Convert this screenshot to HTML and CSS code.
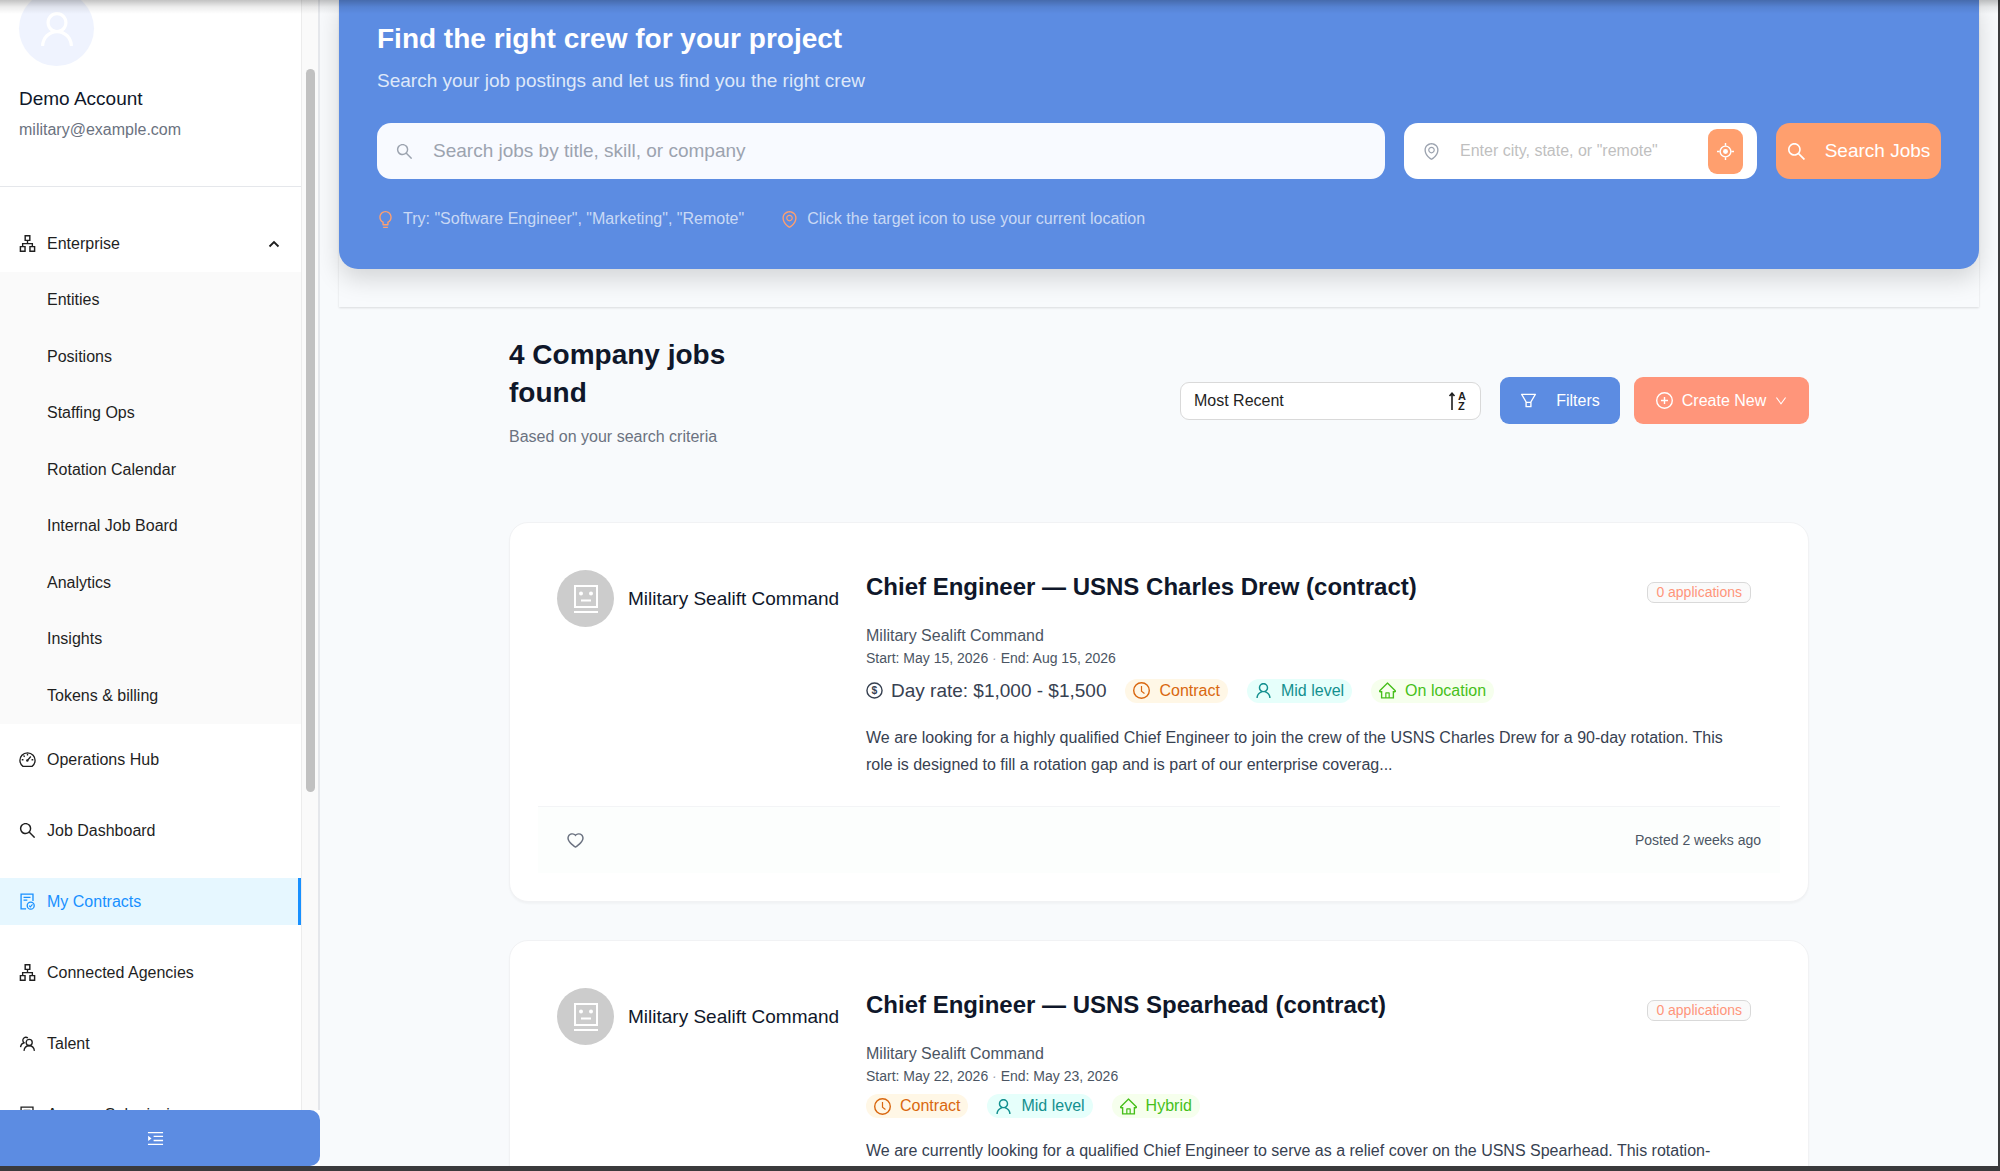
FILE: index.html
```
<!DOCTYPE html>
<html lang="en">
<head>
  <meta charset="UTF-8" />
  <meta name="viewport" content="width=device-width, initial-scale=1" />
  <title>My Contracts</title>
  <link rel="stylesheet" href="styles.css">
</head>
<body>

<!-- Icon sprite -->
<svg class="sprite" aria-hidden="true">
  <symbol id="i-user" viewBox="64 64 896 896"><path d="M858.5 763.6a374 374 0 00-80.6-119.5 375.63 375.63 0 00-119.5-80.6c-.4-.2-.8-.3-1.2-.5C719.5 518 760 444.7 760 362c0-137-111-248-248-248S264 225 264 362c0 82.7 40.5 156 102.8 201.1-.4.2-.8.3-1.2.5-44.8 18.9-85 46-119.5 80.6a375.63 375.63 0 00-80.6 119.5A371.7 371.7 0 00136 901.8a8 8 0 008 8.2h60c4.4 0 7.9-3.5 8-7.8 2-77.2 33-149.5 87.8-204.3 56.7-56.7 132-87.9 212.2-87.9s155.5 31.2 212.2 87.9C779 752.7 810 825 812 902.2c.1 4.4 3.6 7.8 8 7.8h60a8 8 0 008-8.2c-1-47.8-10.9-94.3-29.5-138.2zM512 534c-45.9 0-89.1-17.9-121.6-50.4S340 407.9 340 362c0-45.9 17.9-89.1 50.4-121.6S466.1 190 512 190s89.1 17.9 121.6 50.4S684 316.1 684 362c0 45.9-17.9 89.1-50.4 121.6S557.9 534 512 534z"/></symbol>
  <symbol id="i-search" viewBox="64 64 896 896"><path d="M909.6 854.5L649.9 594.8C690.2 542.7 712 479 712 412c0-80.2-31.3-155.4-87.9-212.1-56.6-56.7-132-87.9-212.1-87.9s-155.5 31.3-212.1 87.9C143.2 256.5 112 331.8 112 412c0 80.1 31.3 155.5 87.9 212.1C256.5 680.8 331.8 712 412 712c67 0 130.6-21.8 182.7-62l259.7 259.6a8.2 8.2 0 0011.6 0l43.6-43.5a8.2 8.2 0 000-11.6zM570.4 570.4C528 612.7 471.8 636 412 636s-116-23.3-158.4-65.6C211.3 528 188 471.8 188 412s23.3-116.1 65.6-158.4C296 211.3 352.2 188 412 188s116.1 23.2 158.4 65.6S636 352.2 636 412s-23.3 116.1-65.6 158.4z"/></symbol>
  <symbol id="i-org" viewBox="64 64 896 896"><path d="M908 640H804V488c0-4.4-3.6-8-8-8H548v-96h108c8.8 0 16-7.2 16-16V80c0-8.8-7.2-16-16-16H368c-8.8 0-16 7.2-16 16v288c0 8.8 7.2 16 16 16h108v96H228c-4.4 0-8 3.6-8 8v152H116c-8.8 0-16 7.2-16 16v288c0 8.8 7.2 16 16 16h288c8.8 0 16-7.2 16-16V656c0-8.8-7.2-16-16-16H292v-88h440v88H620c-8.8 0-16 7.2-16 16v288c0 8.8 7.2 16 16 16h288c8.8 0 16-7.2 16-16V656c0-8.8-7.2-16-16-16zm-564 76v168H176V716h168zm84-408V140h168v168H428zm420 576H680V716h168v168z"/></symbol>
  <symbol id="i-pin" viewBox="64 64 896 896"><path d="M854.6 289.1a362.49 362.49 0 00-79.9-115.7 370.83 370.83 0 00-118.2-77.8C610.7 76.6 562.1 67 512 67c-50.1 0-98.7 9.6-144.5 28.5-44.3 18.3-84 44.5-118.2 77.8A363.6 363.6 0 00169.4 289c-19.5 45-29.4 92.8-29.4 142 0 70.6 16.9 140.9 50.1 208.7 26.7 54.5 64 107.6 111 158.1 80.3 86.2 164.5 138.9 188.4 153a43.9 43.9 0 0022.4 6.1c7.8 0 15.5-2 22.4-6.1 23.9-14.1 108.1-66.8 188.4-153 47-50.4 84.3-103.6 111-158.1C867.1 572 884 501.8 884 431.1c0-49.2-9.9-97-29.4-142zM512 880.2c-65.9-41.9-300-207.8-300-449.1 0-77.9 31.1-151.1 87.6-206.3C356.3 169.5 431.7 139 512 139s155.7 30.5 212.4 85.9C780.9 280 812 353.2 812 431.1c0 241.3-234.1 407.2-300 449.1zm0-617.2c-97.2 0-176 78.8-176 176s78.8 176 176 176 176-78.8 176-176-78.8-176-176-176zm79.2 255.2A111.6 111.6 0 01512 551c-29.9 0-58-11.7-79.2-32.8A111.6 111.6 0 01400 439c0-29.9 11.7-58 32.8-79.2A111.6 111.6 0 01512 327c29.9 0 58 11.6 79.2 32.8S624 409.1 624 439c0 29.9-11.6 58-32.8 79.2z"/></symbol>
  <symbol id="i-aim" viewBox="64 64 896 896"><g fill="none" stroke="currentColor" stroke-width="76"><circle cx="512" cy="512" r="282"/><path d="M512 64v140M512 820v140M64 512h140M820 512h140"/></g><circle cx="512" cy="512" r="130"/></symbol>
  <symbol id="i-bulb" viewBox="64 64 896 896"><path d="M632 888H392c-4.4 0-8 3.6-8 8v32c0 17.7 14.3 32 32 32h192c17.7 0 32-14.3 32-32v-32c0-4.4-3.6-8-8-8zM512 64c-181.1 0-328 146.9-328 328 0 121.4 66 227.4 164 284.1V792c0 17.7 14.3 32 32 32h264c17.7 0 32-14.3 32-32V676.1c98-56.7 164-162.7 164-284.1 0-181.1-146.9-328-328-328zm127.9 549.8L604 634.6V752H420V634.6l-35.9-20.8C305.4 568.3 256 484.5 256 392c0-141.4 114.6-256 256-256s256 114.6 256 256c0 92.5-49.4 176.3-128.1 221.8z"/></symbol>
  <symbol id="i-filter" viewBox="64 64 896 896"><path d="M880.1 154H143.9c-24.5 0-39.8 26.7-27.5 48L349 597.4V838c0 17.7 14.2 32 31.8 32h262.4c17.6 0 31.8-14.3 31.8-32V597.4L907.7 202c12.2-21.3-3.1-48-27.6-48zM603.4 798H420.6V642h182.9v156zm9.6-236.6l-9.5 16.6h-183l-9.5-16.6L212.7 226h598.6L613 561.4z"/></symbol>
  <symbol id="i-plus" viewBox="64 64 896 896"><g fill="none" stroke="currentColor" stroke-width="74"><circle cx="512" cy="512" r="411"/><path d="M512 328v368M328 512h368"/></g></symbol>
  <symbol id="i-down" viewBox="64 64 896 896"><path d="M884 256h-75c-5.1 0-9.9 2.5-12.9 6.6L512 654.2 227.9 262.6c-3-4.1-7.8-6.6-12.9-6.6h-75c-6.5 0-10.3 7.4-6.5 12.7l352.6 486.1c12.8 17.6 39 17.6 51.7 0l352.6-486.1c3.9-5.3.1-12.7-6.4-12.7z"/></symbol>
  <symbol id="i-clock" viewBox="64 64 896 896"><circle cx="512" cy="512" r="411" fill="none" stroke="currentColor" stroke-width="74"/><path d="M686.7 638.6L544.1 535.5V288c0-4.4-3.6-8-8-8H488c-4.4 0-8 3.6-8 8v275.4c0 2.6 1.2 5 3.3 6.5l165.4 120.6c3.6 2.6 8.6 1.8 11.2-1.7l28.6-39c2.6-3.7 1.8-8.7-1.8-11.2z"/></symbol>
  <symbol id="i-home" viewBox="64 64 896 896"><path d="M946.5 505L560.1 118.8l-25.9-25.9a31.5 31.5 0 00-44.4 0L77.5 505a63.9 63.9 0 00-18.8 46c.4 35.2 29.7 63.3 64.9 63.3h42.5V940h691.8V614.3h43.4c17.1 0 33.2-6.7 45.3-18.8a63.6 63.6 0 0018.7-45.3c0-17-6.7-33.1-18.8-45.2zM568 868H456V664h112v204zm217.9-325.7V868H632V640c0-22.1-17.9-40-40-40H432c-22.1 0-40 17.9-40 40v228H238.1V542.3h-96l370-369.7 23.1 23.1L882 542.3h-96.1z"/></symbol>
  <symbol id="i-heart" viewBox="64 64 896 896"><path d="M923 283.6a260.04 260.04 0 00-56.9-82.8 264.4 264.4 0 00-84-55.5A265.34 265.34 0 00679.7 125c-49.3 0-97.4 13.5-139.2 39-10 6.1-19.5 12.8-28.5 20.1-9-7.3-18.5-14-28.5-20.1-41.8-25.5-89.9-39-139.2-39-35.5 0-69.9 6.8-102.4 20.3-31.4 13-59.7 31.7-84 55.5a258.44 258.44 0 00-56.9 82.8c-13.9 32.3-21 66.6-21 101.9 0 33.3 6.8 68 20.3 103.3 11.3 29.5 27.5 60.1 48.2 91 32.8 48.9 77.9 99.9 133.9 151.6 92.8 85.7 184.7 144.9 188.6 147.3l23.7 15.2c10.5 6.7 24 6.7 34.5 0l23.7-15.2c3.9-2.5 95.7-61.6 188.6-147.3 56-51.7 101.1-102.7 133.9-151.6 20.7-30.9 37-61.5 48.2-91 13.5-35.3 20.3-70 20.3-103.3.1-35.3-7-69.6-20.9-101.9zM512 814.8S156 586.7 156 385.5C156 283.6 240.3 201 344.3 201c73.1 0 136.5 40.8 167.7 100.4C543.2 241.8 606.6 201 679.7 201c104 0 188.3 82.6 188.3 184.5 0 201.2-356 429.3-356 429.3z"/></symbol>
  <symbol id="i-dash" viewBox="0 0 18 18"><g fill="none" stroke="currentColor" stroke-width="1.4"><path d="M4.2 16.3A8 8 0 1 1 13.8 16.3Z" stroke-linejoin="round"/><path d="M9 3v1.8M4.8 4.8l1.2 1.2M2.9 9.3h1.8M13.3 9.3h1.8M8.8 10.2l3.7-4.4"/></g><circle cx="8.8" cy="10" r="1.3"/></symbol>
  <symbol id="i-audit" viewBox="0 0 18 18"><g fill="none" stroke="currentColor" stroke-width="1.4"><path d="M7.5 16.8H2.2V1.2h12.6V8.6"/><path d="M4.8 4.7h7.4M4.8 7.5h4"/><circle cx="12.4" cy="13.4" r="3.7"/><path d="M10.7 13.4l1.3 1.3 2.3-2.6" stroke-width="1.1"/></g></symbol>
  <symbol id="i-team" viewBox="0 0 18 18"><g fill="none" stroke="currentColor" stroke-width="1.4"><circle cx="10.8" cy="7.9" r="3.2"/><path d="M5.3 16.8c.3-3.2 2.4-5.4 5.5-5.4s5.2 2.2 5.500 5.4"/><path d="M9.4 3.1A3.2 3.2 0 1 0 5.3 8.2C3.2 8.8 1.9 10.5 1.6 12.9"/></g></symbol>
  <symbol id="i-unfold" viewBox="0 0 18 18"><path d="M1 2h16v1.4H1zM7 6h10v1.4H7zM7 10.4h10v1.4H7zM1 14.5h16v1.4H1zM1.2 6.2v5.4L4.8 8.9z"/></symbol>
  <symbol id="i-bot" viewBox="0 0 24 30"><g fill="none" stroke="currentColor" stroke-width="2"><path d="M1 2h22v21H1zM0 28h24M7 16.5h10"/></g><circle cx="7" cy="9.5" r="2"/><circle cx="17" cy="9.5" r="2"/></symbol>
</svg>

<div class="window">
  <aside class="sidebar">
    <div class="sidebar-scroll">
      <div class="sidebar-content">
        <div class="profile">
          <div class="profile-avatar"><svg><use href="#i-user"/></svg></div>
          <div class="profile-name">Demo Account</div>
          <div class="profile-email">military@example.com</div>
        </div>
        <nav>
          <button type="button" class="nav-item nav-group" aria-expanded="true">
            <svg class="icon"><use href="#i-org"/></svg>
            <span>Enterprise</span>
            <svg class="chevron" viewBox="0 0 12 12"><path d="M1.5 8.5L6 4l4.5 4.5" fill="none" stroke="currentColor" stroke-width="1.8"/></svg>
          </button>
          <ul class="submenu">
            <li><a href="#">Entities</a></li>
            <li><a href="#">Positions</a></li>
            <li><a href="#">Staffing Ops</a></li>
            <li><a href="#">Rotation Calendar</a></li>
            <li><a href="#">Internal Job Board</a></li>
            <li><a href="#">Analytics</a></li>
            <li><a href="#">Insights</a></li>
            <li><a href="#">Tokens &amp; billing</a></li>
          </ul>
          <ul class="menu">
            <li><a class="nav-item" href="#"><svg class="icon"><use href="#i-dash"/></svg>Operations Hub</a></li>
            <li><a class="nav-item" href="#"><svg class="icon"><use href="#i-search"/></svg>Job Dashboard</a></li>
            <li><a class="nav-item active" href="#"><svg class="icon"><use href="#i-audit"/></svg>My Contracts</a></li>
            <li><a class="nav-item" href="#"><svg class="icon"><use href="#i-org"/></svg>Connected Agencies</a></li>
            <li><a class="nav-item" href="#"><svg class="icon"><use href="#i-team"/></svg>Talent</a></li>
            <li><a class="nav-item" href="#"><svg class="icon"><use href="#i-audit"/></svg>Agency Submissions</a></li>
          </ul>
        </nav>
      </div>
      <div class="scroll-track"><div class="scroll-thumb"></div></div>
    </div>
    <button type="button" class="collapse" aria-label="Toggle sidebar"><svg class="icon"><use href="#i-unfold"/></svg></button>
  </aside>

  <main>
    <section class="hero-wrap">
      <div class="hero">
        <h1>Find the right crew for your project</h1>
        <p class="hero-sub">Search your job postings and let us find you the right crew</p>
        <form class="search-form">
          <div class="field field-query">
            <svg class="icon"><use href="#i-search"/></svg>
            <input type="text" aria-label="Search jobs" placeholder="Search jobs by title, skill, or company" />
          </div>
          <div class="field field-location">
            <svg class="icon"><use href="#i-pin"/></svg>
            <input type="text" aria-label="Location" placeholder="Enter city, state, or &quot;remote&quot;" />
            <button type="button" class="locate" aria-label="Use current location"><svg class="icon"><use href="#i-aim"/></svg></button>
          </div>
          <button type="submit" class="search-btn"><svg class="icon"><use href="#i-search"/></svg>Search Jobs</button>
        </form>
        <div class="hints">
          <span><svg class="icon"><use href="#i-bulb"/></svg>Try: "Software Engineer", "Marketing", "Remote"</span>
          <span><svg class="icon"><use href="#i-pin"/></svg>Click the target icon to use your current location</span>
        </div>
      </div>
    </section>

    <section class="results">
      <header class="results-header">
        <div class="results-title">
          <h2>4 Company jobs found</h2>
          <p>Based on your search criteria</p>
        </div>
        <div class="controls">
          <div class="sort">
            <select aria-label="Sort by">
              <option>Most Recent</option>
            </select>
            <svg class="sort-arrow" viewBox="0 0 8 20"><path d="M4 19V3M1.5 5L4 2.2 6.500 5" fill="none" stroke="currentColor" stroke-width="1.6"/></svg>
            <span class="sort-az"><b>A</b><b>Z</b></span>
          </div>
          <button type="button" class="btn btn-filter"><svg class="icon"><use href="#i-filter"/></svg>Filters</button>
          <button type="button" class="btn btn-create"><svg class="icon"><use href="#i-plus"/></svg>Create New<svg class="caret"><use href="#i-down"/></svg></button>
        </div>
      </header>

      <article class="card">
        <div class="card-body">
          <div class="company">
            <span class="company-avatar"><svg><use href="#i-bot"/></svg></span>
            <span>Military Sealift Command</span>
          </div>
          <div class="job">
            <div class="job-head">
              <h3>Chief Engineer — USNS Charles Drew (contract)</h3>
              <span class="applications">0 applications</span>
            </div>
            <p class="job-company">Military Sealift Command</p>
            <p class="job-dates">Start: May 15, 2026 <i>·</i> End: Aug 15, 2026</p>
            <div class="tags">
              <span class="rate"><svg class="icon" viewBox="0 0 18 18"><circle cx="9" cy="9" r="8" fill="none" stroke="currentColor" stroke-width="1.5"/><text x="9" y="13" text-anchor="middle">$</text></svg>Day rate: $1,000 - $1,500</span>
              <span class="tag tag-orange"><svg class="icon"><use href="#i-clock"/></svg>Contract</span>
              <span class="tag tag-cyan"><svg class="icon"><use href="#i-user"/></svg>Mid level</span>
              <span class="tag tag-green"><svg class="icon"><use href="#i-home"/></svg>On location</span>
            </div>
            <p class="job-desc">We are looking for a highly qualified Chief Engineer to join the crew of the USNS Charles Drew for a 90-day rotation. This role is designed to fill a rotation gap and is part of our enterprise coverag...</p>
          </div>
        </div>
        <footer class="card-footer">
          <button type="button" class="like" aria-label="Save job"><svg class="icon"><use href="#i-heart"/></svg></button>
          <span>Posted 2 weeks ago</span>
        </footer>
      </article>

      <article class="card">
        <div class="card-body">
          <div class="company">
            <span class="company-avatar"><svg><use href="#i-bot"/></svg></span>
            <span>Military Sealift Command</span>
          </div>
          <div class="job">
            <div class="job-head">
              <h3>Chief Engineer — USNS Spearhead (contract)</h3>
              <span class="applications">0 applications</span>
            </div>
            <p class="job-company">Military Sealift Command</p>
            <p class="job-dates">Start: May 22, 2026 <i>·</i> End: May 23, 2026</p>
            <div class="tags">
              <span class="tag tag-orange"><svg class="icon"><use href="#i-clock"/></svg>Contract</span>
              <span class="tag tag-cyan"><svg class="icon"><use href="#i-user"/></svg>Mid level</span>
              <span class="tag tag-green"><svg class="icon"><use href="#i-home"/></svg>Hybrid</span>
            </div>
            <p class="job-desc">We are currently looking for a qualified Chief Engineer to serve as a relief cover on the USNS Spearhead. This rotation-</p>
          </div>
        </div>
      </article>
    </section>
  </main>
  <div class="top-shadow"></div>
</div>
</body>
</html>
```

FILE: styles.css
```
/* Reset and base */
* {
  box-sizing: border-box;
}
body {
  margin: 0;
  font-family: "Liberation Sans", Arial, sans-serif;
  font-size: 16px;
  color: #111827;
}
h1, h2, h3, p, ul {
  margin: 0;
  padding: 0;
}
ul {
  list-style: none;
}
a {
  color: inherit;
  text-decoration: none;
}
button, input, select {
  font: inherit;
  color: inherit;
  border: none;
  background: none;
  padding: 0;
}
button {
  cursor: pointer;
}
svg {
  fill: currentColor;
}
.sprite {
  display: none;
}
.icon {
  width: 17px;
  height: 17px;
  flex: none;
}
.window {
  display: flex;
  height: 100vh;
  padding: 0 2px 5px 0;
  background: #3a3a3c;
  overflow: hidden;
}
.top-shadow {
  position: absolute;
  top: 0;
  left: 0;
  right: 0;
  height: 14px;
  background: linear-gradient(rgba(0,0,0,0.24), rgba(0,0,0,0.07) 50%, rgba(0,0,0,0));
  pointer-events: none;
}

/* Sidebar */
.sidebar {
  display: flex;
  flex-direction: column;
  flex: none;
  width: 320px;
  background: #fff;
}
.sidebar-scroll {
  display: flex;
  flex: 1;
  min-height: 0;
  overflow: hidden;
}
.sidebar-content {
  flex: 1;
  color: #1f1f1f;
}
.profile {
  padding: 0 19px 44px;
  border-bottom: 1px solid #e5e7eb;
}
.profile-avatar {
  display: flex;
  align-items: center;
  justify-content: center;
  width: 75px;
  height: 75px;
  margin-top: -9px;
  border-radius: 50%;
  background: #eff3fe;
  color: #fff;
}
.profile-avatar svg {
  width: 38px;
  height: 38px;
}
.profile-name {
  margin-top: 18px;
  font-size: 19px;
  line-height: 30px;
  color: #0f172a;
}
.profile-email {
  margin-top: 4px;
  line-height: 24px;
  color: #6b7280;
}
.nav-item {
  display: flex;
  align-items: center;
  gap: 11px;
  width: 100%;
  height: 47px;
  padding: 0 19px;
}
.nav-item.active {
  background: #e6f7ff;
  color: #1890ff;
  border-right: 3px solid #1890ff;
}
.nav-group {
  margin: 33px 0 5px;
}
.chevron {
  width: 12px;
  height: 12px;
  margin-left: auto;
  margin-right: 2px;
}
.submenu {
  display: grid;
  grid-auto-rows: 1fr;
  height: 452px;
  background: #fafafa;
}
.submenu a {
  display: flex;
  align-items: center;
  height: 100%;
  padding-left: 47px;
}
.menu {
  display: grid;
  gap: 24px;
  padding-top: 12px;
}
.scroll-track {
  width: 19px;
  padding: 69px 3px 0 4px;
  background: #fafafa;
  border-left: 1px solid #ececec;
  border-right: 2px solid #e5e7eb;
}
.scroll-thumb {
  width: 9px;
  height: 723px;
  border-radius: 5px;
  background: #c1c1c1;
}
.collapse {
  flex: none;
  height: 56px;
  padding-right: 10px;
  border-radius: 0 10px 10px 0;
  background: #5c8ce2;
  color: #fff;
}
.collapse .icon {
  vertical-align: middle;
}

/* Main */
main {
  flex: 1;
  min-width: 0;
  padding: 0 19px;
  background: #f8fafc;
  overflow: hidden;
}
.hero-wrap {
  padding-bottom: 38px;
  box-shadow: 0 1px 2px rgba(0,0,0,0.12);
}
.hero {
  padding: 20px 38px 37px;
  border-radius: 0 0 19px 19px;
  background: #5c8ce2;
  color: #fff;
  box-shadow: 0 10px 24px rgba(0,0,0,0.15);
}
h1 {
  font-size: 28px;
  line-height: 38px;
}
.hero-sub {
  margin-top: 8px;
  font-size: 19px;
  line-height: 29px;
  color: #dee8f9;
}
.search-form {
  display: flex;
  gap: 19px;
  margin-top: 28px;
}
.field {
  display: flex;
  align-items: center;
  height: 56px;
  padding-left: 19px;
  border-radius: 14px;
  background: #fff;
  color: #9ca3af;
}
.field input {
  flex: 1;
  min-width: 0;
  outline: none;
}
.field-query {
  flex: 1;
  gap: 20px;
  background: #f8faff;
  font-size: 19px;
}
.field-query input::placeholder {
  color: #9ca3af;
}
.field-location {
  gap: 20px;
  width: 353px;
  padding-right: 14px;
}
.field-location input::placeholder {
  color: #bfbfbf;
}
.locate {
  display: flex;
  align-items: center;
  justify-content: center;
  width: 35px;
  height: 45px;
  border-radius: 9px;
  background: #ff9f6e;
  color: #fff;
}
.search-btn {
  display: flex;
  align-items: center;
  justify-content: center;
  gap: 19px;
  width: 165px;
  border-radius: 14px;
  background: #ff9f6e;
  color: #fff;
  font-size: 19px;
}
.search-btn .icon {
  width: 19px;
  height: 19px;
}
.hints {
  display: flex;
  gap: 37px;
  margin-top: 27px;
  line-height: 26px;
  color: #c9d9f5;
}
.hints span {
  display: flex;
  align-items: center;
  gap: 9px;
}
.hints .icon {
  color: #ff9f6e;
}

/* Results */
.results {
  max-width: 1300px;
  margin: 29px auto 0;
}
.results-header {
  display: flex;
  align-items: center;
  justify-content: space-between;
  margin-bottom: 57px;
}
.results-title {
  width: 240px;
}
h2 {
  font-size: 28px;
  line-height: 38px;
  color: #0f172a;
}
.results-title p {
  margin: 12px 0 15px;
  line-height: 26px;
  color: #6b7280;
}
.controls {
  display: flex;
  align-items: center;
}
.sort {
  display: flex;
  align-items: center;
  width: 301px;
  height: 38px;
  padding: 0 14px 0 13px;
  margin-right: 19px;
  border: 1px solid #d9d9d9;
  border-radius: 9px;
  background: #fff;
  color: #1f1f1f;
}
.sort select {
  flex: 1;
  appearance: none;
  outline: none;
}
.sort-arrow {
  width: 8px;
  height: 20px;
}
.sort-az {
  display: grid;
  margin-left: 2px;
  font-size: 11px;
  line-height: 10px;
}
.btn {
  display: flex;
  align-items: center;
  justify-content: center;
  height: 47px;
  border-radius: 9px;
  color: #fff;
}
.btn-filter {
  gap: 19px;
  width: 120px;
  margin-right: 14px;
  background: #5c8ce2;
}
.btn-create {
  gap: 9px;
  width: 175px;
  background: #ff957a;
}
.caret {
  width: 12px;
  height: 12px;
}

/* Job cards */
.card {
  margin-bottom: 38px;
  padding: 28px;
  border: 1px solid #f1f2f4;
  border-radius: 19px;
  background: #fff;
  box-shadow: 0 2px 2px rgba(0,0,0,0.03);
}
.card-body {
  display: grid;
  grid-template-columns: 309px 1fr;
  padding: 19px 29px 28px 19px;
}
.company {
  display: flex;
  align-items: center;
  align-self: start;
  gap: 14px;
  font-size: 19px;
  color: #0f172a;
}
.company-avatar {
  display: flex;
  align-items: center;
  justify-content: center;
  width: 57px;
  height: 57px;
  border-radius: 50%;
  background: #ccc;
  color: #fff;
}
.company-avatar svg {
  width: 24px;
  height: 30px;
}
.job-head {
  display: flex;
  justify-content: space-between;
  align-items: flex-start;
}
h3 {
  font-size: 24px;
  line-height: 34px;
  color: #0f172a;
}
.applications {
  margin-top: 12px;
  padding: 0 8px;
  border: 1px solid #d9d9d9;
  border-radius: 7px;
  background: #fafafa;
  color: #ff957a;
  font-size: 14px;
  line-height: 19px;
}
.job-company {
  margin-top: 20px;
  line-height: 24px;
  color: #4b5563;
}
.job-dates {
  font-size: 14px;
  line-height: 20px;
  color: #4b5563;
}
.job-dates i {
  color: #9ca3af;
}
.tags {
  display: flex;
  align-items: center;
  gap: 19px;
  margin-top: 8px;
}
.rate {
  display: flex;
  align-items: center;
  gap: 8px;
  font-size: 19px;
  line-height: 29px;
  color: #374151;
}
.rate text {
  font-size: 11px;
  font-weight: bold;
}
.tag {
  display: flex;
  align-items: center;
  gap: 9px;
  padding: 0 8px;
  border-radius: 12px;
  line-height: 24px;
}
.tag-orange {
  background: #fff7e6;
  color: #d9670f;
}
.tag-cyan {
  background: #e6fffb;
  color: #13908f;
}
.tag-green {
  background: #f6ffed;
  color: #46bf1a;
}
.job-desc {
  margin-top: 19px;
  line-height: 27px;
  color: #374151;
}
.card-footer {
  display: flex;
  align-items: center;
  justify-content: space-between;
  height: 67px;
  padding: 0 19px 0 29px;
  border-top: 1px solid #f3f4f6;
  background: #fcfefd;
  font-size: 14px;
  color: #4b5563;
}
.like {
  display: flex;
  color: #6b7280;
}
```
